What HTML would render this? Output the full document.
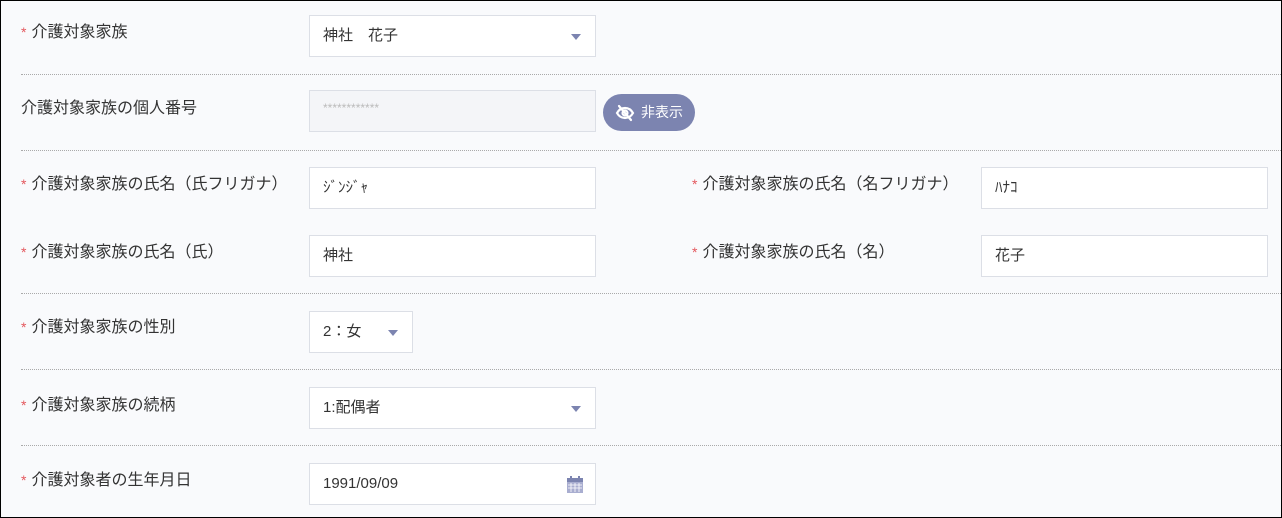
<!DOCTYPE html><html><head><meta charset="utf-8"><style>
body{margin:0;width:1282px;height:518px;overflow:hidden;font-family:"Liberation Sans","Noto Sans CJK JP",sans-serif;font-size:15px;color:#333}
.wrap{position:absolute;left:0;top:0;width:1280px;height:516px;border:1px solid #000;background:#f9fafc}
.a{position:absolute}
.lbl{position:absolute;line-height:20px;white-space:nowrap;font-size:16px}
.req::before{content:"*";color:#e4575d;margin-right:5px;font-size:14px}
.inp{position:absolute;box-sizing:border-box;height:42px;border:1px solid #dcdfe6;background:#fff;line-height:40px;padding-left:13px;white-space:nowrap}
.sep{position:absolute;left:20px;right:0;border-top:1px dotted #aaa}
.tri{position:absolute;width:0;height:0;border-left:5px solid transparent;border-right:5px solid transparent;border-top:6px solid #7c84b0;top:18px}
</style></head><body><div class="wrap">
<div class="lbl req" style="left:20px;top:21px">介護対象家族</div>
<div class="inp" style="left:308px;top:14px;width:287px">神社　花子<div class="tri" style="right:14px"></div></div>
<div class="sep" style="top:73px"></div>
<div class="lbl" style="left:20px;top:98px">介護対象家族の個人番号</div>
<div class="inp" style="left:308px;top:89px;width:287px;background:#f4f5f8;color:#bbb;font-size:12px;line-height:34px">************</div>
<div class="a" style="left:602px;top:93px;width:92px;height:37px;border-radius:19px;background:#7c84b0;color:#fff;font-size:14px;line-height:37px">
<svg class="a" style="left:12px;top:9px" width="20" height="20" viewBox="0 0 20 20" fill="none" stroke="#fff" stroke-width="2.2" stroke-linecap="round"><path d="M2 10c2-3.5 5-5 8-5s6 1.5 8 5c-2 3.5-5 5-8 5s-6-1.5-8-5z"/><circle cx="10" cy="10" r="2.5"/><path d="M4 3l12 14"/></svg>
<span class="a" style="left:38px">非表示</span></div>
<div class="sep" style="top:149px"></div>
<div class="lbl req" style="left:20px;top:173px">介護対象家族の氏名（氏フリガナ）</div>
<div class="inp" style="left:308px;top:166px;width:287px">ｼﾞﾝｼﾞｬ</div>
<div class="lbl req" style="left:691px;top:173px">介護対象家族の氏名（名フリガナ）</div>
<div class="inp" style="left:980px;top:166px;width:287px">ﾊﾅｺ</div>
<div class="lbl req" style="left:20px;top:241px">介護対象家族の氏名（氏）</div>
<div class="inp" style="left:308px;top:234px;width:287px">神社</div>
<div class="lbl req" style="left:691px;top:241px">介護対象家族の氏名（名）</div>
<div class="inp" style="left:980px;top:234px;width:287px">花子</div>
<div class="sep" style="top:292px"></div>
<div class="lbl req" style="left:20px;top:316px">介護対象家族の性別</div>
<div class="inp" style="left:308px;top:310px;width:104px">2：女<div class="tri" style="right:14px"></div></div>
<div class="sep" style="top:368px"></div>
<div class="lbl req" style="left:20px;top:394px">介護対象家族の続柄</div>
<div class="inp" style="left:308px;top:386px;width:287px">1:配偶者<div class="tri" style="right:14px"></div></div>
<div class="sep" style="top:444px"></div>
<div class="lbl req" style="left:20px;top:469px">介護対象者の生年月日</div>
<div class="inp" style="left:308px;top:462px;width:287px">1991/09/09
<svg class="a" style="right:12px;top:12px" width="16" height="17" viewBox="0 0 16 17"><rect x="0" y="2" width="16" height="15" fill="#a9aed0"/><rect x="0" y="2" width="16" height="4" fill="#7c84b0"/><rect x="3" y="0" width="2" height="4" fill="#7c84b0"/><rect x="11" y="0" width="2" height="4" fill="#7c84b0"/><path d="M1 9h14M1 12h14M4 7v9M8 7v9M12 7v9" stroke="#fff" stroke-width=".8"/></svg></div>
</div></body></html>
